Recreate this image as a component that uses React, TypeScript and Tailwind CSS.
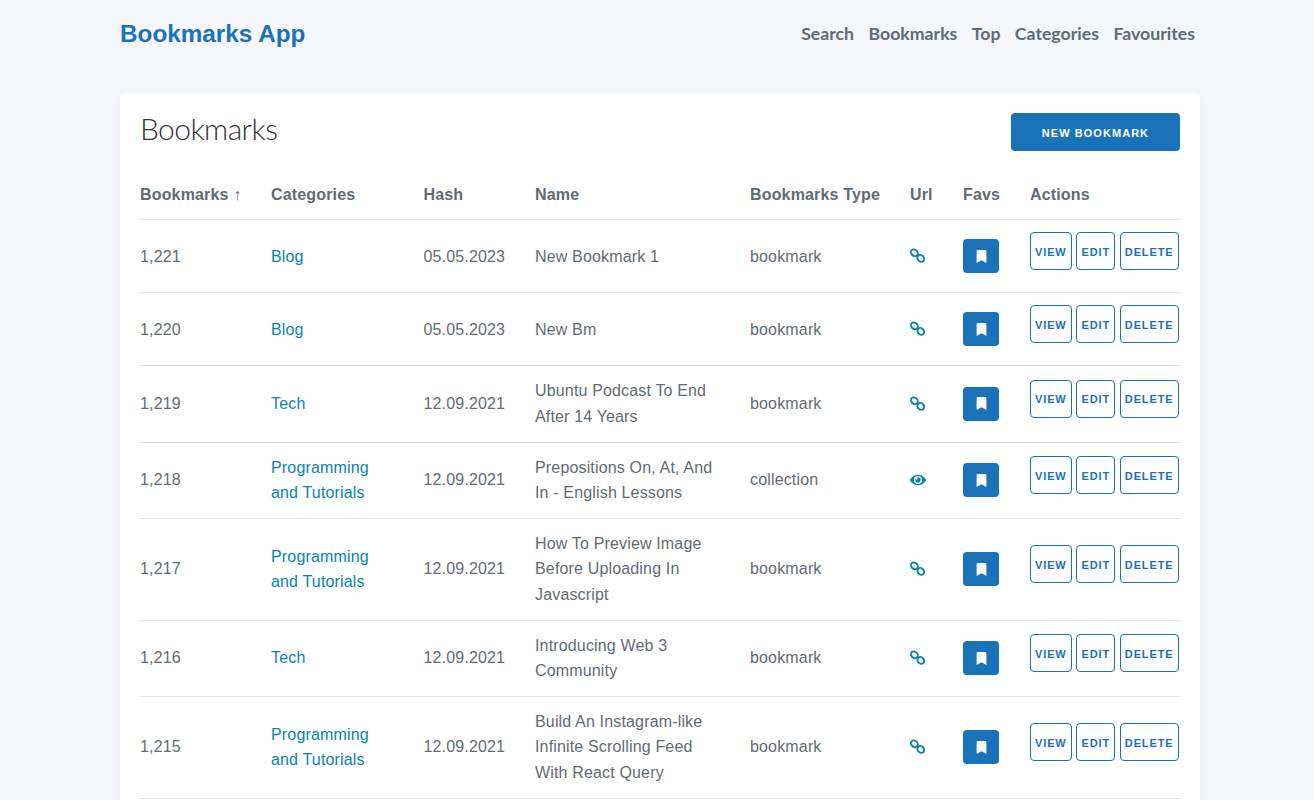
import { FaBookmark, FaEye } from "react-icons/fa";

const NAV_LINKS = ["Search", "Bookmarks", "Top", "Categories", "Favourites"];

const HEADERS = ["Bookmarks ↑", "Categories", "Hash", "Name", "Bookmarks Type", "Url", "Favs", "Actions"];

const ROWS = [
  { id: "1,221", cat: "Blog", hash: "05.05.2023", name: "New Bookmark 1", type: "bookmark" },
  { id: "1,220", cat: "Blog", hash: "05.05.2023", name: "New Bm", type: "bookmark" },
  { id: "1,219", cat: "Tech", hash: "12.09.2021", name: "Ubuntu Podcast To End After 14 Years", type: "bookmark" },
  { id: "1,218", cat: "Programming and Tutorials", hash: "12.09.2021", name: "Prepositions On, At, And In - English Lessons", type: "collection" },
  { id: "1,217", cat: "Programming and Tutorials", hash: "12.09.2021", name: "How To Preview Image Before Uploading In Javascript", type: "bookmark" },
  { id: "1,216", cat: "Tech", hash: "12.09.2021", name: "Introducing Web 3 Community", type: "bookmark" },
  { id: "1,215", cat: "Programming and Tutorials", hash: "12.09.2021", name: "Build An Instagram-like Infinite Scrolling Feed With React Query", type: "bookmark" },
];

// two linked rings, the reference has no bar between them
const ChainIcon = () => (
  <svg width="16" height="16" viewBox="0 0 16 16" fill="none" stroke="currentColor" strokeWidth="1.9">
    <ellipse cx="4.4" cy="4.8" rx="3.7" ry="3.1" transform="rotate(45 4.4 4.8)" />
    <ellipse cx="10.8" cy="10.4" rx="3.7" ry="3.1" transform="rotate(45 10.8 10.4)" />
  </svg>
);

const ActionButton = ({ label }: { label: string }) => (
  <button className="h-[38px] px-[4px] pt-[2px] border border-[#1a72b8] rounded-[4px] bg-white text-[#1a72b8] text-[11px] font-bold tracking-[0.08em] leading-none">
    {label}
  </button>
);

export default function App() {
  return (
    <div className="min-h-screen bg-[#f5f7fb] font-['Liberation_Sans',sans-serif] text-[16px] text-[#636b74]">
      <div className="w-[1080px] ml-[120px]">
        {/* Navbar */}
        <header className="flex items-center justify-between h-[68px] pr-[5px]">
          <a className="text-[24.3px] font-bold text-[#1a72b8]">Bookmarks App</a>
          <nav className="flex gap-[14.4px] font-['Lato',sans-serif] font-bold text-[#616b75] text-[17.7px]">
            {NAV_LINKS.map((it) => (
              <a key={it}>{it}</a>
            ))}
          </nav>
        </header>

        {/* Card */}
        <div className="mt-[25px] bg-white rounded-[5px] shadow-[0_2px_10px_rgba(0,0,0,0.06)] p-[20px]">
          <div className="flex items-start justify-between h-[57.3px]">
            <h1 className="font-['Lato',sans-serif] font-light text-[30px] leading-[30px] tracking-[-0.02em] text-[#333]">Bookmarks</h1>
            <button className="w-[169px] h-[38px] pt-[2px] bg-[#1a72b8] text-white rounded-[4px] text-[11px] font-bold tracking-[0.095em]">
              NEW BOOKMARK
            </button>
          </div>

          <table className="w-[1040px] table-fixed border-collapse">
            <colgroup>
              <col className="w-[131px]" />
              <col className="w-[152.5px]" />
              <col className="w-[111.5px]" />
              <col className="w-[215px]" />
              <col className="w-[160px]" />
              <col className="w-[53px]" />
              <col className="w-[67px]" />
              <col className="w-[150px]" />
            </colgroup>
            <thead>
              <tr className="border-b border-[#dee2e6]">
                {HEADERS.map((it) => (
                  <th key={it} className="h-[49.6px] text-left font-bold text-[#616b75] whitespace-nowrap tracking-[0.01em] align-middle">
                    {it}
                  </th>
                ))}
              </tr>
            </thead>
            <tbody>
              {ROWS.map((it) => (
                <tr key={it.id} className="border-b border-[#dee2e6]">
                  <td className="py-[12px] align-middle leading-[25.6px] tracking-[0.01em]">{it.id}</td>
                  <td className="py-[12px] pr-[30px] align-middle leading-[25.6px] tracking-[0.01em] text-[#0a84ae]">{it.cat}</td>
                  <td className="py-[12px] align-middle leading-[25.6px] tracking-[0.01em]">{it.hash}</td>
                  <td className="py-[12px] pr-[25px] align-middle leading-[25.6px] tracking-[0.01em]">{it.name}</td>
                  <td className="py-[12px] align-middle leading-[25.6px] tracking-[0.01em]">{it.type}</td>
                  <td className="py-[12px] align-middle text-[#0a84ae]">
                    {it.type === "collection" ? <FaEye size={16} /> : <ChainIcon />}
                  </td>
                  <td className="py-[12px] align-middle">
                    <button className="w-[36px] h-[34px] bg-[#1a72b8] text-white rounded-[4px] flex items-center justify-center">
                      <FaBookmark size={13} />
                    </button>
                  </td>
                  <td className="py-[12px] align-middle">
                    <div className="flex gap-[4.8px] mb-[10px]">
                      <ActionButton label="VIEW" />
                      <ActionButton label="EDIT" />
                      <ActionButton label="DELETE" />
                    </div>
                  </td>
                </tr>
              ))}
            </tbody>
          </table>
        </div>
      </div>
    </div>
  );
}
